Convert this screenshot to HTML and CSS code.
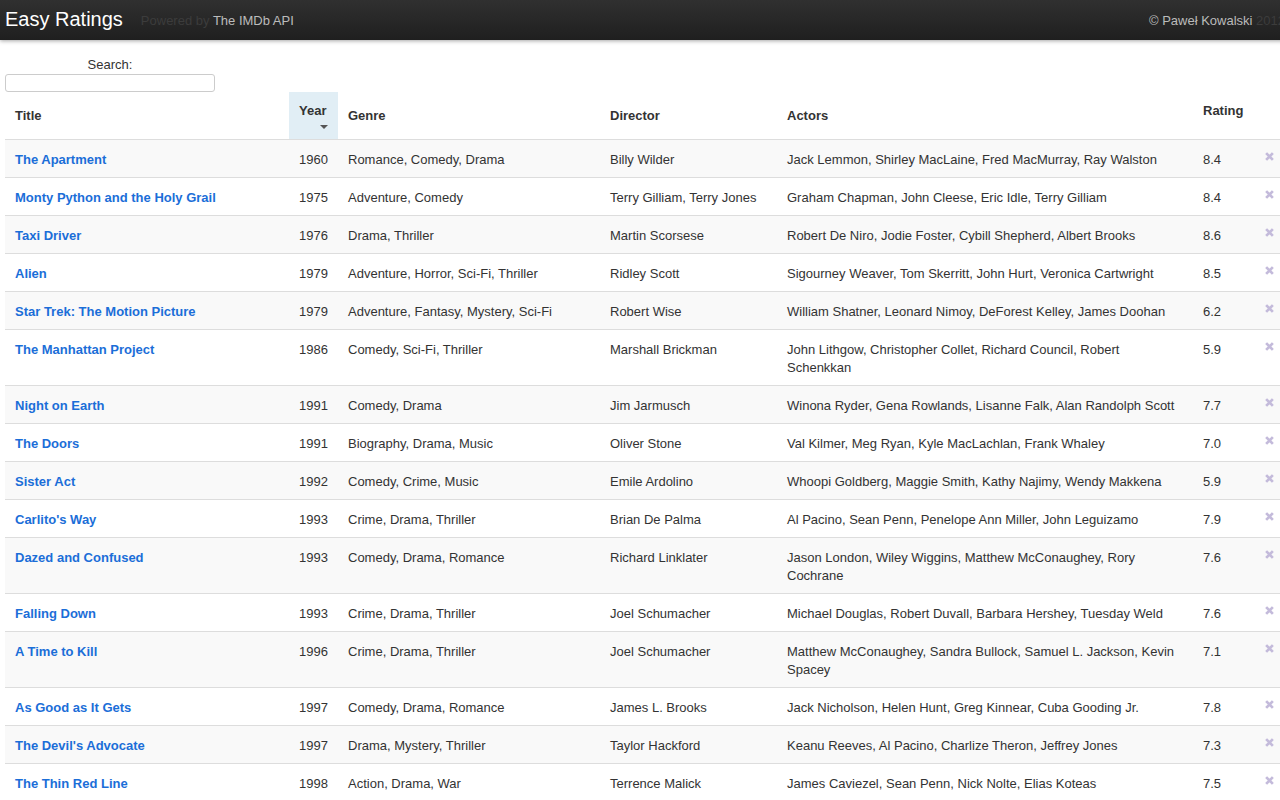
FILE: index.html
```html
<!DOCTYPE html>
<html>
<head>
<meta charset="utf-8">
<title>Easy Ratings</title>
<link rel="stylesheet" href="styles.css">
</head>
<body>
<div class="page">
  <header class="navbar">
    <div class="nav-left">
      <span class="brand">Easy Ratings</span>
      <span class="powered">Powered by <span class="light">The IMDb API</span></span>
    </div>
    <div class="nav-right"><span class="light">© Paweł Kowalski</span> 2012</div>
  </header>

  <div class="search">
    <label class="search-label">Search:<br><input class="search-input" type="text"></label>
  </div>

  <table class="movies">
    <colgroup>
      <col class="c-title"><col class="c-year"><col class="c-genre"><col class="c-dir"><col class="c-actors"><col class="c-rating"><col class="c-del">
    </colgroup>
    <thead>
      <tr>
        <th>Title</th>
        <th class="sorted"><div class="th-label">Year</div><div class="arrow-line"><span class="arrow"></span></div></th>
        <th>Genre</th>
        <th>Director</th>
        <th>Actors</th>
        <th><div class="th-label">Rating</div><div class="arrow-line"></div></th>
        <th></th>
      </tr>
    </thead>
    <tbody>
      <tr><td><a href="#">The Apartment</a></td><td>1960</td><td>Romance, Comedy, Drama</td><td>Billy Wilder</td><td>Jack Lemmon, Shirley MacLaine, Fred MacMurray, Ray Walston</td><td>8.4</td><td><svg class="del" viewBox="0 0 8 8"><path d="M1 1L7 7M7 1L1 7"/></svg></td></tr>
      <tr><td><a href="#">Monty Python and the Holy Grail</a></td><td>1975</td><td>Adventure, Comedy</td><td>Terry Gilliam, Terry Jones</td><td>Graham Chapman, John Cleese, Eric Idle, Terry Gilliam</td><td>8.4</td><td><svg class="del" viewBox="0 0 8 8"><path d="M1 1L7 7M7 1L1 7"/></svg></td></tr>
      <tr><td><a href="#">Taxi Driver</a></td><td>1976</td><td>Drama, Thriller</td><td>Martin Scorsese</td><td>Robert De Niro, Jodie Foster, Cybill Shepherd, Albert Brooks</td><td>8.6</td><td><svg class="del" viewBox="0 0 8 8"><path d="M1 1L7 7M7 1L1 7"/></svg></td></tr>
      <tr><td><a href="#">Alien</a></td><td>1979</td><td>Adventure, Horror, Sci-Fi, Thriller</td><td>Ridley Scott</td><td>Sigourney Weaver, Tom Skerritt, John Hurt, Veronica Cartwright</td><td>8.5</td><td><svg class="del" viewBox="0 0 8 8"><path d="M1 1L7 7M7 1L1 7"/></svg></td></tr>
      <tr><td><a href="#">Star Trek: The Motion Picture</a></td><td>1979</td><td>Adventure, Fantasy, Mystery, Sci-Fi</td><td>Robert Wise</td><td>William Shatner, Leonard Nimoy, DeForest Kelley, James Doohan</td><td>6.2</td><td><svg class="del" viewBox="0 0 8 8"><path d="M1 1L7 7M7 1L1 7"/></svg></td></tr>
      <tr><td><a href="#">The Manhattan Project</a></td><td>1986</td><td>Comedy, Sci-Fi, Thriller</td><td>Marshall Brickman</td><td>John Lithgow, Christopher Collet, Richard Council, Robert Schenkkan</td><td>5.9</td><td><svg class="del" viewBox="0 0 8 8"><path d="M1 1L7 7M7 1L1 7"/></svg></td></tr>
      <tr><td><a href="#">Night on Earth</a></td><td>1991</td><td>Comedy, Drama</td><td>Jim Jarmusch</td><td>Winona Ryder, Gena Rowlands, Lisanne Falk, Alan Randolph Scott</td><td>7.7</td><td><svg class="del" viewBox="0 0 8 8"><path d="M1 1L7 7M7 1L1 7"/></svg></td></tr>
      <tr><td><a href="#">The Doors</a></td><td>1991</td><td>Biography, Drama, Music</td><td>Oliver Stone</td><td>Val Kilmer, Meg Ryan, Kyle MacLachlan, Frank Whaley</td><td>7.0</td><td><svg class="del" viewBox="0 0 8 8"><path d="M1 1L7 7M7 1L1 7"/></svg></td></tr>
      <tr><td><a href="#">Sister Act</a></td><td>1992</td><td>Comedy, Crime, Music</td><td>Emile Ardolino</td><td>Whoopi Goldberg, Maggie Smith, Kathy Najimy, Wendy Makkena</td><td>5.9</td><td><svg class="del" viewBox="0 0 8 8"><path d="M1 1L7 7M7 1L1 7"/></svg></td></tr>
      <tr><td><a href="#">Carlito's Way</a></td><td>1993</td><td>Crime, Drama, Thriller</td><td>Brian De Palma</td><td>Al Pacino, Sean Penn, Penelope Ann Miller, John Leguizamo</td><td>7.9</td><td><svg class="del" viewBox="0 0 8 8"><path d="M1 1L7 7M7 1L1 7"/></svg></td></tr>
      <tr><td><a href="#">Dazed and Confused</a></td><td>1993</td><td>Comedy, Drama, Romance</td><td>Richard Linklater</td><td>Jason London, Wiley Wiggins, Matthew McConaughey, Rory Cochrane</td><td>7.6</td><td><svg class="del" viewBox="0 0 8 8"><path d="M1 1L7 7M7 1L1 7"/></svg></td></tr>
      <tr><td><a href="#">Falling Down</a></td><td>1993</td><td>Crime, Drama, Thriller</td><td>Joel Schumacher</td><td>Michael Douglas, Robert Duvall, Barbara Hershey, Tuesday Weld</td><td>7.6</td><td><svg class="del" viewBox="0 0 8 8"><path d="M1 1L7 7M7 1L1 7"/></svg></td></tr>
      <tr><td><a href="#">A Time to Kill</a></td><td>1996</td><td>Crime, Drama, Thriller</td><td>Joel Schumacher</td><td>Matthew McConaughey, Sandra Bullock, Samuel L. Jackson, Kevin Spacey</td><td>7.1</td><td><svg class="del" viewBox="0 0 8 8"><path d="M1 1L7 7M7 1L1 7"/></svg></td></tr>
      <tr><td><a href="#">As Good as It Gets</a></td><td>1997</td><td>Comedy, Drama, Romance</td><td>James L. Brooks</td><td>Jack Nicholson, Helen Hunt, Greg Kinnear, Cuba Gooding Jr.</td><td>7.8</td><td><svg class="del" viewBox="0 0 8 8"><path d="M1 1L7 7M7 1L1 7"/></svg></td></tr>
      <tr><td><a href="#">The Devil's Advocate</a></td><td>1997</td><td>Drama, Mystery, Thriller</td><td>Taylor Hackford</td><td>Keanu Reeves, Al Pacino, Charlize Theron, Jeffrey Jones</td><td>7.3</td><td><svg class="del" viewBox="0 0 8 8"><path d="M1 1L7 7M7 1L1 7"/></svg></td></tr>
      <tr><td><a href="#">The Thin Red Line</a></td><td>1998</td><td>Action, Drama, War</td><td>Terrence Malick</td><td>James Caviezel, Sean Penn, Nick Nolte, Elias Koteas</td><td>7.5</td><td><svg class="del" viewBox="0 0 8 8"><path d="M1 1L7 7M7 1L1 7"/></svg></td></tr>
    </tbody>
  </table>
</div>
</body>
</html>
```

FILE: styles.css
```css
html, body {
  margin: 0;
  padding: 0;
  overflow: hidden;
  background: #fff;
}
body {
  font-family: "Liberation Sans", Arial, sans-serif;
  font-size: 13px;
  line-height: 18px;
  color: #333;
}
.page {
  width: 1290px;
}
.navbar {
  height: 40px;
  display: flex;
  align-items: center;
  justify-content: space-between;
  padding: 0 5px;
  background: linear-gradient(#303030, #1f1f1f);
  box-shadow: 0 1px 4px rgba(0, 0, 0, 0.35);
}
.nav-left {
  display: flex;
  align-items: center;
}
.brand {
  font-size: 20px;
  line-height: 24px;
  color: #fff;
  margin-right: 18px;
  padding-bottom: 2px;
}
.powered, .nav-right {
  font-size: 13px;
  color: #3c3c3c;
  padding-top: 1px;
}
.light {
  color: #bbb;
}
.search {
  padding: 16px 5px 0;
  width: 210px;
  text-align: center;
}
.search-label {
  display: block;
}
.search-input {
  display: block;
  box-sizing: border-box;
  width: 210px;
  height: 18px;
  margin: 0;
  padding: 0 4px;
  border: 1px solid #ccc;
  border-radius: 3px;
  background: #fff;
  font: inherit;
}
.movies {
  margin-left: 5px;
  width: 1278px;
  table-layout: fixed;
  border-collapse: separate;
  border-spacing: 0;
}
.c-title { width: 284px; }
.c-year { width: 49px; }
.c-genre { width: 262px; }
.c-dir { width: 177px; }
.c-actors { width: 416px; }
.c-rating { width: 62px; }
.c-del { width: 28px; }
.movies th {
  text-align: left;
  font-weight: bold;
  padding: 9px 10px;
  vertical-align: middle;
}
.movies th.sorted {
  background: #e1eef5;
}
.th-label {
  padding-top: 1px;
}
.arrow-line {
  height: 10px;
  text-align: right;
}
.arrow {
  display: inline-block;
  vertical-align: top;
  margin-top: 5px;
  width: 0;
  height: 0;
  border-left: 4px solid transparent;
  border-right: 4px solid transparent;
  border-top: 4px solid #555;
}
.movies td {
  border-top: 1px solid #ddd;
  padding: 11px 10px 8px;
  vertical-align: top;
}
.movies tbody tr:nth-child(odd) td {
  background: #f9f9f9;
}
.movies a {
  color: #1b6ed8;
  font-weight: bold;
  text-decoration: none;
}
.del {
  display: block;
  width: 9px;
  height: 9px;
  margin-top: 1px;
  fill: none;
  stroke: #c4bbdb;
  stroke-width: 2.4;
}
```
